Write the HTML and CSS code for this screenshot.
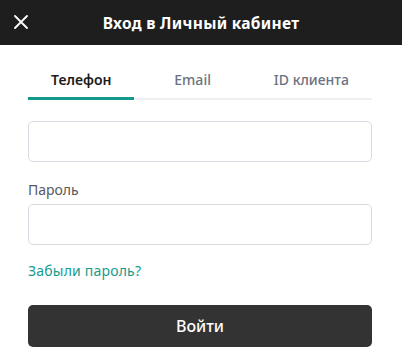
FILE: index.html
```html
<!DOCTYPE html>
<html lang="ru">
<head>
  <meta charset="UTF-8">
  <meta name="viewport" content="width=device-width, initial-scale=1.0">
  <title>Вход в Личный кабинет</title>
  <link rel="stylesheet" href="styles.css">
</head>
<body>
  <div class="modal">
    <div class="modal-head">
      <a href="javascript:;" class="close">
        <svg width="14" height="14" viewBox="0 0 14 14">
          <path d="M1 1L13 13M13 1L1 13" stroke="#fff" stroke-width="1.8" stroke-linecap="round"/>
        </svg>
      </a>
      <div class="modal-title">Вход в Личный кабинет</div>
    </div>
    <div class="modal-body">
      <div class="tabs">
        <a href="javascript:;" class="tab active">Телефон</a>
        <a href="javascript:;" class="tab">Email</a>
        <a href="javascript:;" class="tab">ID клиента</a>
      </div>
      <form class="login-form">
        <input type="tel" class="field first">
        <label class="label">Пароль</label>
        <input type="password" class="field">
        <a href="javascript:;" class="forgot">Забыли пароль?</a>
        <button type="button" class="submit">Войти</button>
      </form>
    </div>
  </div>
</body>
</html>
```

FILE: styles.css
```css
body {
  margin: 0;
  font-family: "Noto Sans", "Open Sans", sans-serif;
  background: #fff;
}
a {
  text-decoration: none;
}
.modal {
  width: 402px;
}
.modal-head {
  height: 45px;
  background: #1e1e1e;
  display: flex;
  align-items: center;
  justify-content: center;
  position: relative;
}
.close {
  position: absolute;
  left: 14px;
  top: 15px;
  width: 14px;
  height: 14px;
  display: flex;
}
.modal-title {
  color: #fff;
  font-size: 15.5px;
  font-weight: 700;
  letter-spacing: 0.3px;
}
.modal-body {
  padding: 20px 30px 0 28px;
}
.tabs {
  display: flex;
  justify-content: space-between;
  border-bottom: 2px solid #eef0f3;
}
.tab {
  padding: 5px 23px 8px;
  font-size: 14px;
  font-weight: 500;
  color: #6b7280;
  margin-bottom: -2px;
  border-bottom: 3px solid transparent;
}
.tab.active {
  color: #1a1a1a;
  font-weight: 600;
  border-bottom-color: #13998a;
}
.login-form {
  display: flex;
  flex-direction: column;
}
.field {
  height: 41px;
  box-sizing: border-box;
  border: 1px solid #d8dbe1;
  border-radius: 5px;
  outline: none;
  padding: 0 12px;
  font: inherit;
}
.field.first {
  margin-top: 21px;
}
.label {
  margin: 19px 0 5px;
  font-size: 14px;
  color: #555a60;
  line-height: 18px;
}
.forgot {
  margin-top: 17px;
  font-size: 14px;
  letter-spacing: 0.2px;
  line-height: 18px;
  color: #169b8f;
  align-self: flex-start;
}
.submit {
  margin-top: 25px;
  height: 42px;
  border: 0;
  border-radius: 5px;
  background: #333;
  color: #fff;
  font: 500 16px "Noto Sans", "Open Sans", sans-serif;
  cursor: pointer;
}
```
